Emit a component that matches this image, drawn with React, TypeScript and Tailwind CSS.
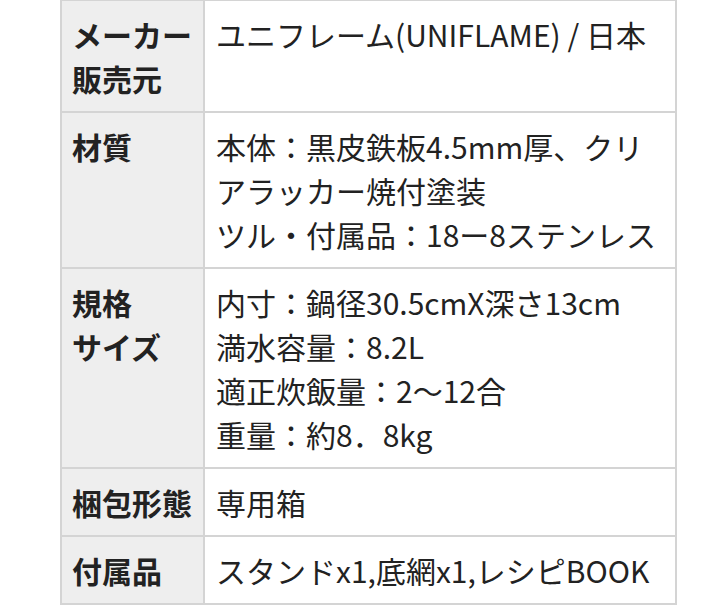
export default function App() {
  const rows: { label: string[]; value: string[] }[] = [
    { label: ["メーカー", "販売元"], value: ["ユニフレーム(UNIFLAME) / 日本"] },
    {
      label: ["材質"],
      value: ["本体：黒皮鉄板4.5mm厚、クリ", "アラッカー焼付塗装", "ツル・付属品：18ー8ステンレス"],
    },
    {
      label: ["規格", "サイズ"],
      value: ["内寸：鍋径30.5cmX深さ13cm", "満水容量：8.2L", "適正炊飯量：2〜12合", "重量：約8．8kg"],
    },
    { label: ["梱包形態"], value: ["専用箱"] },
    { label: ["付属品"], value: ["スタンドx1,底網x1,レシピBOOK"] },
  ]

  return (
    <div
      className="min-h-[607px] w-[720px] overflow-hidden bg-white pl-[60px] text-[#222]"
      style={{ fontFamily: '"Noto Sans CJK JP", "Noto Sans", sans-serif' }}
    >
      <table className="-mt-[1px] w-[617px] border-collapse border-2 border-[#d4d4d4] text-[30px] leading-[44px]">
        <tbody>
          {rows.map((row, i) => (
            <tr key={i}>
              <th className="w-[143px] border-2 border-[#d4d4d4] bg-[#eeeeee] py-[11px] pl-[10px] pr-0 text-left align-top font-bold whitespace-nowrap">
                {row.label.map((l, j) => (
                  <div key={j}>{l}</div>
                ))}
              </th>
              <td className="border-2 border-[#d4d4d4] bg-white py-[11px] pl-[11px] pr-2 align-top whitespace-nowrap">
                {row.value.map((v, j) => (
                  <div key={j}>{v}</div>
                ))}
              </td>
            </tr>
          ))}
        </tbody>
      </table>
    </div>
  )
}
